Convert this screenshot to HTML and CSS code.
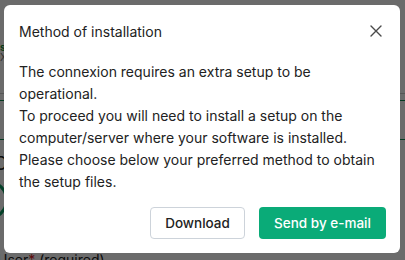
FILE: index.html
```html
<!DOCTYPE html>
<html lang="en">
<head>
    <meta charset="UTF-8">
    <meta name="viewport" content="width=device-width, initial-scale=1.0">
    <title>Method of installation</title>
    <link rel="stylesheet" href="styles.css">
</head>
<body>
    <!-- page behind the dialog -->
    <div class="page">
        <div class="page-tag">s</div>
        <div class="page-sub">X</div>
        <div class="page-rule grey"></div>
        <div class="page-rule green"></div>
        <div class="page-rule green low"></div>
        <div class="page-letter">C</div>
        <div class="page-ring"></div>
        <div class="page-label">User<span class="req">*</span> (required)</div>
    </div>

    <div class="overlay">
        <div class="modal">
            <div class="modal-header">
                <h2>Method of installation</h2>
                <button class="btn-close" aria-label="Close">
                    <svg width="12" height="12" viewBox="0 0 12 12">
                        <path d="M1 1L11 11M11 1L1 11" stroke="#4a4a4a" stroke-width="1.4" stroke-linecap="round"/>
                    </svg>
                </button>
            </div>
            <div class="modal-body">
                <p>The connexion requires an extra setup to be operational.</p>
                <p>To proceed you will need to install a setup on the computer/server where your software is installed.</p>
                <p>Please choose below your preferred method to obtain the setup files.</p>
            </div>
            <div class="modal-footer">
                <button class="btn btn-outline">Download</button>
                <button class="btn btn-primary">Send by e-mail</button>
            </div>
        </div>
    </div>
</body>
</html>
```

FILE: styles.css
```css
* {
    margin: 0;
    padding: 0;
    box-sizing: border-box;
}

body {
    font-family: Inter, "Liberation Sans", sans-serif;
    background: #fff;
    color: #222;
    overflow: hidden;
}

.page {
    height: 260px;
    padding-top: 42px;
}

.page-tag {
    color: #1a8a3a;
    font-weight: 700;
    font-size: 10px;
    line-height: 10px;
}

.page-sub {
    color: #777;
    font-size: 10px;
    line-height: 10px;
}

.page-rule {
    height: 1px;
}

.page-rule.grey {
    background: #ccc;
    margin-top: 31px;
}

.page-rule.green {
    background: #0a8a50;
    margin-top: 6px;
}

.page-rule.green.low {
    margin-top: 38px;
}

.page-letter {
    font-size: 18px;
    line-height: 20px;
    margin-top: 14px;
    margin-left: -6px;
    color: #222;
}

.page-ring {
    width: 40px;
    height: 40px;
    margin-left: -32px;
    margin-top: 6px;
    border: 3px solid #0a9a60;
    border-radius: 50%;
}

.page-label {
    font-size: 14px;
    line-height: 16px;
    margin-top: 32px;
    margin-left: -3px;
    color: #222;
}

.req {
    color: #d22;
}

.overlay {
    position: fixed;
    inset: 0;
    background: rgba(0, 0, 0, 0.58);
    padding: 5px 5px 7px 4px;
}

.modal {
    background: #fff;
    border-radius: 6px;
    height: 248px;
    display: flex;
    flex-direction: column;
    padding: 0 14px 14px 15px;
}

.modal-header {
    display: flex;
    align-items: center;
    justify-content: space-between;
    height: 52px;
}

.modal-header h2 {
    font-size: 14px;
    font-weight: 400;
    color: #222;
}

.btn-close {
    background: none;
    border: none;
    width: 20px;
    height: 20px;
    display: flex;
    align-items: center;
    justify-content: center;
    cursor: pointer;
}

.modal-body {
    font-size: 14px;
    line-height: 22px;
    color: #222;
    padding-top: 4px;
}

.modal-footer {
    margin-top: auto;
    display: flex;
    justify-content: flex-end;
    gap: 14px;
}

.btn {
    height: 32px;
    border-radius: 4px;
    font-family: inherit;
    font-size: 13.5px;
    font-weight: 500;
    cursor: pointer;
}

.btn-outline {
    width: 95px;
    background: #fff;
    border: 1px solid #cdd3da;
    color: #222;
}

.btn-primary {
    width: 127px;
    background: #0aab78;
    border: none;
    color: #fff;
}
```
